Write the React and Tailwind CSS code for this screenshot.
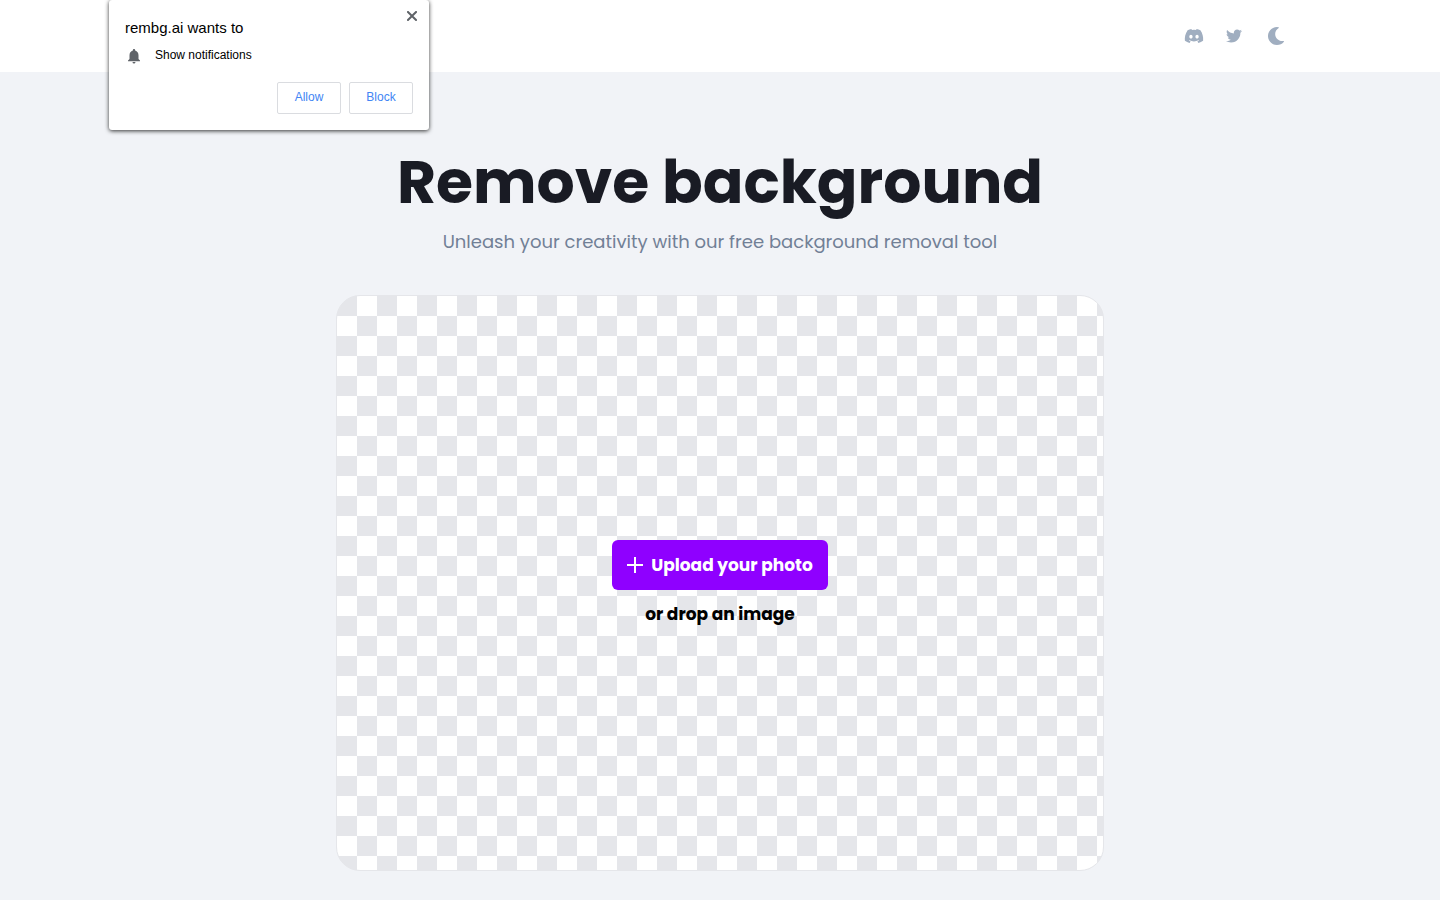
import React, { useState } from 'react';
import { FaDiscord, FaMoon, FaTwitter } from 'react-icons/fa';
import { MdNotifications } from 'react-icons/md';

const NotificationPrompt = ({ onClose }) => (
  <div
    role="dialog"
    aria-label="Notification permission"
    className="absolute top-0 left-[109px] z-20 w-80 rounded-[3px] bg-white px-4 pt-4 pb-4 font-['Liberation_Sans',Arial,sans-serif] text-black shadow-[0_1px_4px_rgba(0,0,0,0.8)]"
  >
    <button type="button" aria-label="Close" onClick={onClose} className="absolute top-[7px] right-2 p-1">
      <svg className="h-[10px] w-[10px]" viewBox="0 0 10 10" stroke="#5f6368" strokeWidth="2" fill="none">
        <path d="M0.3 0.3l9.4 9.4M9.7 0.3l-9.4 9.4" />
      </svg>
    </button>
    <p className="text-[15px] leading-6">rembg.ai wants to</p>
    <div className="mt-[7px] flex items-start">
      <MdNotifications className="h-[18px] w-[18px] shrink-0 text-[#5f6368]" />
      <span className="ml-3 text-xs leading-4">Show notifications</span>
    </div>
    <div className="mt-[17px] flex justify-end gap-2">
      <button type="button" onClick={onClose} className="h-8 w-16 rounded-[2px] border border-[#dadce0] pb-0.5 text-xs text-[#4285f4]">
        Allow
      </button>
      <button type="button" onClick={onClose} className="h-8 w-16 rounded-[2px] border border-[#dadce0] pb-0.5 text-xs text-[#4285f4]">
        Block
      </button>
    </div>
  </div>
);

const Header = () => (
  <header className="h-18 bg-white">
    <div className="mx-auto flex h-full max-w-6xl items-center justify-end text-[#a0aec0]">
      <a href="#discord" aria-label="Discord" className="flex h-10 w-10 items-center justify-center">
        <FaDiscord className="h-5 w-5" />
      </a>
      <a href="#twitter" aria-label="Twitter" className="flex h-10 w-10 items-center justify-center">
        <FaTwitter className="h-4 w-4" />
      </a>
      <button type="button" aria-label="Toggle dark mode" className="ml-0.5 flex h-10 w-10 items-center justify-center">
        <FaMoon className="h-[18px] w-[18px]" />
      </button>
    </div>
  </header>
);

const UploadArea = () => (
  <div className="mt-10 flex aspect-[4/3] w-full max-w-3xl flex-col items-center justify-center rounded-3xl border border-[#e5e6ea] bg-[conic-gradient(#fff_25%,#e5e6ea_0_50%,#fff_0_75%,#e5e6ea_0)] bg-[length:40px_40px] text-[17px] leading-6 font-bold">
    <label
      htmlFor="photo"
      className="flex h-[50px] w-[216px] cursor-pointer items-center justify-center gap-2 rounded-md bg-[#8f00ff] text-white"
    >
      <svg className="h-4 w-4 shrink-0" viewBox="0 0 16 16" stroke="currentColor" strokeWidth="2">
        <path d="M8 0v16M0 8h16" />
      </svg>
      <span className="whitespace-nowrap">Upload your photo</span>
    </label>
    <input id="photo" type="file" accept="image/*" className="sr-only" />
    <p className="mt-3 text-black">or drop an image</p>
  </div>
);

const App = () => {
  const [promptOpen, setPromptOpen] = useState(true);

  return (
    <div className="relative min-h-screen bg-[#f1f3f7] font-[Poppins,Inter,sans-serif]">
      {promptOpen && <NotificationPrompt onClose={() => setPromptOpen(false)} />}
      <Header />
      <main className="flex flex-col items-center px-4 pt-18 pb-7">
        <h1 className="text-center text-6xl leading-[76px] font-bold text-[#191b24]">Remove background</h1>
        <p className="mt-2 text-center text-lg leading-[27px] text-[#718096]">
          Unleash your creativity with our free background removal tool
        </p>
        <UploadArea />
      </main>
    </div>
  );
};

export default App;
